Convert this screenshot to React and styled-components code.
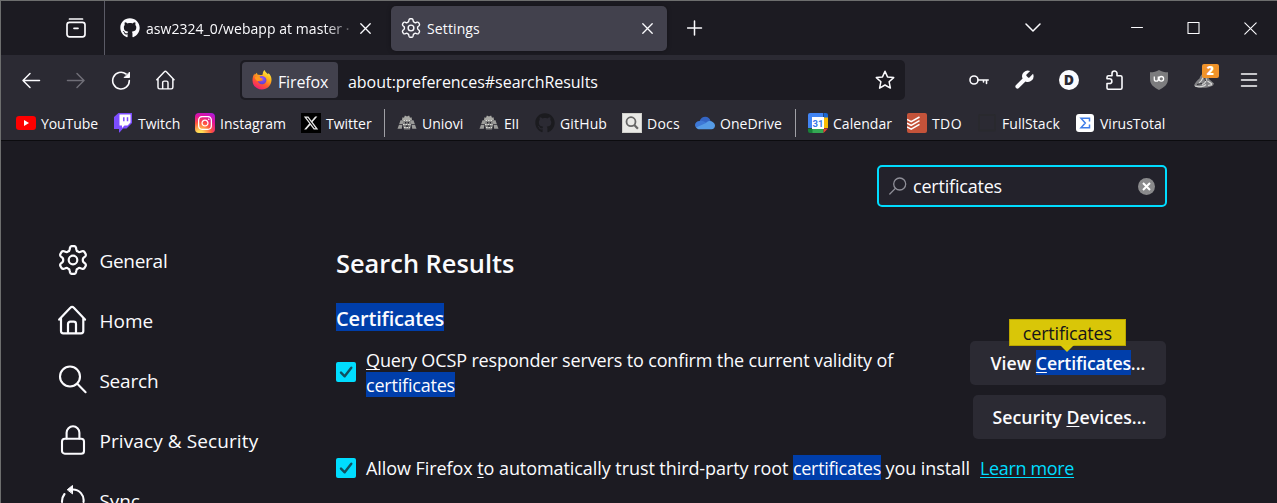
import React from "react";
import styled, { createGlobalStyle } from "styled-components";
import { FaGithub, FaInstagram, FaXTwitter } from "react-icons/fa6";

const Global = createGlobalStyle`
  *, *::before, *::after { box-sizing: border-box; }
  html, body, #root { height: 100%; }
  body {
    margin: 0;
    overflow: hidden;
    background: #1c1b22;
    color: #fbfbfe;
    font-family: "Open Sans", "Noto Sans", sans-serif;
  }
  svg { display: block; flex: none; }
`;

const Window = styled.div`
  height: 100vh;
  display: flex;
  flex-direction: column;
  overflow: hidden;
  border-top: 1px solid #6d6e6e;
  border-left: 1px solid #6d6e6e;
  background: #1c1b22;
`;

/* ---------- tab strip ---------- */
const TabStrip = styled.header`
  flex: none;
  height: 54px;
  display: flex;
  align-items: center;
`;

const FirefoxView = styled.div`
  width: 104px;
  height: 54px;
  padding-left: 64px;
  display: flex;
  align-items: center;
  border-right: 1px solid #5b5b66;
`;

const Tab = styled.div`
  display: flex;
  align-items: center;
  height: 45px;
  width: ${(p) => (p.$active ? 276 : 270)}px;
  padding: 0 ${(p) => (p.$active ? "14px 0 10px" : "4px 0 15px")};
  margin-right: ${(p) => (p.$active ? 0 : 16)}px;
  border-radius: 5px;
  background: ${(p) => (p.$active ? "#42414d" : "transparent")};
  box-shadow: ${(p) => (p.$active ? "0 0 4px rgba(0,0,0,.35)" : "none")};
`;

const TabTitle = styled.span`
  flex: 1;
  min-width: 0;
  margin: 1px 0 0 6px;
  overflow: hidden;
  white-space: nowrap;
  font-size: 14px;
  line-height: 20px;
  letter-spacing: ${(p) => p.$ls || 0}px;
  ${(p) => p.$fade && "mask-image: linear-gradient(to left, transparent 0, #000 36px);"}
`;

const NewTab = styled.div`
  margin-left: 20px;
  width: 16px;
`;

const WindowButtons = styled.div`
  margin-left: auto;
  padding-right: 20px;
  display: flex;
  align-items: center;
`;

const Chevron = styled.div`
  margin-right: 90px;
`;

const Controls = styled.div`
  display: flex;
  align-items: center;
  gap: 44px;
`;

/* ---------- navigation bar ---------- */
const NavBar = styled.nav`
  flex: none;
  height: 50px;
  padding-left: 20px;
  display: flex;
  align-items: center;
  background: #2b2a33;
`;

const NavButtons = styled.div`
  width: 219px;
  display: flex;
  gap: 25px;
`;

const UrlBar = styled.div`
  width: 665px;
  height: 40px;
  padding: 2px 10px 2px 2px;
  display: flex;
  align-items: center;
  border-radius: 5px;
  background: #1c1b22;
`;

const Identity = styled.div`
  width: 96px;
  height: 36px;
  padding-left: 10px;
  display: flex;
  align-items: center;
  gap: 6px;
  border-radius: 4px;
  background: #42414d;
`;

const UrlText = styled.span`
  margin-top: 3px;
  font-size: 16px;
  line-height: 22px;
  letter-spacing: ${(p) => p.$ls || 0}px;
`;

const Address = styled(UrlText)`
  flex: 1;
  margin-left: 10px;
`;

const Extensions = styled.div`
  margin-left: auto;
  padding-right: 19px;
  display: flex;
  align-items: center;
  gap: 25px;
`;

const BadgeHost = styled.div`
  position: relative;
  margin-right: 1px;
`;

const Badge = styled.span`
  position: absolute;
  left: 8px;
  top: -6px;
  width: 17px;
  height: 14px;
  border-radius: 2px;
  background: #f0932b;
  color: #fff;
  font-size: 12.5px;
  font-weight: 800;
  line-height: 13px;
  text-align: center;
`;

const Disc = styled.div`
  width: 20px;
  height: 20px;
  border-radius: 50%;
  background: #fbfbfe;
  color: #2b2a33;
  font-size: 14px;
  font-weight: 800;
  line-height: 20px;
  text-align: center;
`;

/* ---------- bookmarks ---------- */
const Bookmarks = styled.div`
  flex: none;
  height: 36px;
  padding: 1px 0 0 15px;
  display: flex;
  align-items: center;
  background: #2b2a33;
  border-bottom: 1px solid #0c0c0f;
`;

const Bookmark = styled.div`
  width: ${(p) => p.$w}px;
  display: flex;
  align-items: center;
  gap: 5px;
  font-size: 14px;
  line-height: 20px;
  letter-spacing: ${(p) => p.$ls || 0}px;
  white-space: nowrap;
`;

const BookmarkLabel = styled.span`
  padding-top: 2px;
`;

const Divider = styled.div`
  width: 1px;
  height: 28px;
  margin-right: 12px;
  background: #a0a0a6;
`;

/* ---------- preferences ---------- */
const Preferences = styled.main`
  flex: 1;
  min-height: 0;
  display: flex;
  overflow: hidden;
`;

const Sidebar = styled.aside`
  width: 335px;
  flex: none;
  padding: 90px 0 0 57px;
`;

const Category = styled.div`
  height: 60px;
  display: flex;
  align-items: center;
  gap: 11.4px;
  font-size: 19px;
  line-height: 26px;
  letter-spacing: ${(p) => p.$ls || 0}px;
  svg { margin-top: -2px; }
`;

const Pane = styled.section`
  width: 830px;
  flex: none;
  padding-top: 24px;
  display: flex;
  flex-direction: column;
`;

const SearchField = styled.div`
  align-self: flex-end;
  width: 290px;
  height: 42px;
  margin-right: -1px;
  padding: 0 10px;
  display: flex;
  align-items: center;
  border: 2px solid #00ddff;
  border-radius: 5px;
  background: #23222b;
  font-size: 18px;
  line-height: 24px;
  letter-spacing: -0.2px;
  span { flex: 1; margin-left: 6px; }
`;

const Title = styled.h1`
  margin: 38px 0 0;
  font-size: 25.4px;
  font-weight: 600;
  line-height: 36px;
`;

const GroupTitle = styled.h2`
  align-self: flex-start;
  margin: 22px 0 0;
  height: 28px;
  padding-top: 2px;
  background: #003eaa;
  font-size: 20px;
  font-weight: 600;
  line-height: 27px;
  letter-spacing: -0.15px;
`;

const OptionRow = styled.div`
  height: 108px;
  display: flex;
  justify-content: space-between;
`;

const Option = styled.label`
  display: flex;
  align-items: center;
  gap: 10px;
  height: ${(p) => p.$h}px;
  margin-top: 17px;
  font-size: 18px;
  line-height: 25px;
  white-space: nowrap;
  letter-spacing: ${(p) => p.$ls}px;
`;

const Checkbox = styled.span`
  width: 20px;
  height: 20px;
  margin-bottom: ${(p) => p.$lift}px;
  border-radius: 2px;
  background: #00ddff;
`;

const Mark = styled.mark`
  position: relative;
  padding-top: 1px;
  background: #003eaa;
  color: inherit;
  letter-spacing: ${(p) => p.$ls || 0}px;
`;

const AccessKey = styled.span`
  text-decoration: underline;
  text-decoration-thickness: 1px;
  text-underline-offset: 2px;
  text-decoration-skip-ink: none;
`;

const Buttons = styled.div`
  padding-top: 10px;
  display: flex;
  flex-direction: column;
  align-items: flex-end;
  gap: 10px;
`;

const Button = styled.div`
  width: ${(p) => p.$w}px;
  height: 44px;
  border-radius: 5px;
  background: #2b2a33;
  font-size: 17.7px;
  font-weight: 600;
  line-height: 44px;
  text-align: center;
  white-space: nowrap;
  letter-spacing: ${(p) => p.$ls || 0}px;
`;

const Tooltip = styled.span`
  position: absolute;
  left: -27px;
  top: -31px;
  width: 117px;
  height: 27px;
  border: 1px solid #bba600;
  background: rgba(221, 202, 8, 0.98);
  color: #15141a;
  font-size: 18px;
  font-weight: 400;
  line-height: 27px;
  text-align: center;
  letter-spacing: -0.2px;
  &::after {
    content: "";
    position: absolute;
    left: 50px;
    top: 25px;
    border: 7px solid transparent;
    border-bottom: 0;
    border-top-color: #dcc908;
  }
`;

const Link = styled.a`
  color: #00ddff;
  letter-spacing: -0.35px;
  text-decoration: underline;
  text-decoration-thickness: 1px;
  text-underline-offset: 2px;
  text-decoration-skip-ink: none;
`;

/* ---------- icons ---------- */
const Line = ({ w = 20, h = w, sw = 1.5, color = "#fbfbfe", children }) => (
  <svg width={w} height={h} viewBox={`0 0 ${w} ${h}`} fill="none" stroke={color} strokeWidth={sw} strokeLinecap="round" strokeLinejoin="round">
    {children}
  </svg>
);

const gearPath = (() => {
  const pt = (deg, r) => {
    const a = ((deg - 90) * Math.PI) / 180;
    return `${(15 + r * Math.cos(a)).toFixed(2)} ${(15 + r * Math.sin(a)).toFixed(2)}`;
  };
  let d = "";
  for (let k = 0; k < 360; k += 60) {
    d += `${k ? "L" : "M"}${pt(k - 17, 11.2)} L${pt(k - 14, 12.6)} Q${pt(k - 11, 14)} ${pt(k - 5, 14)} L${pt(k + 5, 14)} Q${pt(k + 11, 14)} ${pt(k + 14, 12.6)} L${pt(k + 17, 11.2)} Q${pt(k + 21, 9.6)} ${pt(k + 30, 9.9)} Q${pt(k + 39, 9.6)} ${pt(k + 43, 11.2)}`;
  }
  return d + "Z";
})();

const Gear = ({ size, sw }) => (
  <svg width={size} height={size} viewBox="0 0 30 30" fill="none" stroke="#fbfbfe" strokeWidth={sw} strokeLinejoin="round">
    <path d={gearPath} />
    <circle cx="15" cy="15" r="4.3" />
  </svg>
);

const Cross = ({ s = 11, sw = 1.3 }) => (
  <Line w={s} sw={sw}>
    <path d={`M.8 .8 L${s - 0.8} ${s - 0.8} M${s - 0.8} .8 L.8 ${s - 0.8}`} />
  </Line>
);

const FirefoxLogo = () => (
  <svg width="20" height="20" viewBox="0 0 20 20">
    <defs>
      <linearGradient id="ffBody" x1=".8" y1="0" x2=".25" y2="1">
        <stop offset="0" stopColor="#fff44f" />
        <stop offset=".35" stopColor="#ffb31a" />
        <stop offset=".65" stopColor="#ff5a2e" />
        <stop offset="1" stopColor="#f0147d" />
      </linearGradient>
      <radialGradient id="ffGlobe" cx=".5" cy=".3" r=".8">
        <stop offset="0" stopColor="#9059ff" />
        <stop offset="1" stopColor="#5b3bc4" />
      </radialGradient>
    </defs>
    <path fill="url(#ffBody)" d="M12.6 0c.4 2 2 2.8 3.4 4.3.3-.2.2-.8.1-1.2C18.600 4.800 19.700 7.600 19.500 10.300 19.200 15.600 15 19.600 9.900 19.600 4.600 19.600.5 15.400.5 10.200.5 7.800 1.300 5.300 2.400 3.600l.4 1.600C3.300 4.100 4.200 3.200 5 2.800c0 .8.2 1.500.7 2 .6-.2 1.500-.1 2.100.1C9 5.200 10.100 5 10.700 4.500 10.700 2.500 11.500.9 12.600 0z" />
    <path fill="url(#ffGlobe)" d="M7.400 6.600c2.100-1.500 6.700-.4 7 3.100.2 2.600-1.800 4.600-4.300 4.600-2.200 0-4-1.400-4.200-3.300 1 .7 2.200.6 3.200 0 .8-.4 1.400-.7 2-.7-.1-1.100-1.300-1.400-2.600-1.400-.6-.2-1.500-1.200-1.100-2.300z" />
    <path fill="#ff9a1f" d="M2.800 7.500c1.600-1.500 3.500-1.300 4.800-1.100.2 1.200.9 1.700 2.800 1.900-.4 1.200-1.700 1.300-2.400 1.900-.8.800-1.500.8-2.100.8C4.600 11 3 9.400 2.800 7.500z" />
  </svg>
);

const YouTube = () => (
  <svg width="20" height="20" viewBox="0 0 20 20">
    <rect y="3" width="20" height="14" rx="3.2" fill="#f00" />
    <path d="M8 7v6l5-3z" fill="#fff" />
  </svg>
);

const Twitch = () => (
  <svg width="20" height="20" viewBox="0 0 20 20">
    <path d="M5.500 0H19v10l-5.500 5.500h-3.500L6.500 19.500H6V16H1V4z" fill="#7c4dff" />
    <path d="M6.500 1.500H17.500v8l-3 3h-3L9 15v-2.500H6.500z" fill="#fff" />
    <path d="M10.800 4.200v4M14.500 4.200v4" stroke="#7c4dff" strokeWidth="1.500" />
  </svg>
);

const TileFrame = styled.div`
  width: 20px;
  height: 20px;
  flex: none;
  display: flex;
  align-items: center;
  justify-content: center;
  border-radius: ${(p) => p.$r || 0}px;
  background: ${(p) => p.$bg};
`;

const Crest = () => (
  <svg width="20" height="20" viewBox="0 0 20 20" fill="#a9a9a5">
    <path d="M5.500 4.300l1.500.5.900-2.200 2.100.8 2.100-.8.900 2.200 1.500-.5.500 2.700h-10z" />
    <path d="M3.500 7.300h3l-.8 3.700H2.200zM16.500 7.300h-3l.8 3.700h3.500zM2 11.700h3.400l-.6 4H.5zM18 11.700h-3.400l.6 4h4.300z" opacity=".9" />
    <path d="M6.500 7h7l1 3.500-1.500 6H7L5.500 10.500z" opacity=".7" />
    <path d="M6.500 7.500h7M6 11.500h8M7 14.500h6" stroke="#deded8" strokeWidth="1" strokeDasharray="1.600 .9" />
    <path d="M8 9h1.300v1.400H8zM10.700 9H12v1.400h-1.300zM8.800 12.500h2.500v1.200H8.800z" fill="#25242b" />
  </svg>
);

const Docs = () => (
  <svg width="20" height="20" viewBox="0 0 20 20" fill="none">
    <rect x=".5" y=".5" width="19" height="19" fill="#e9e9e6" stroke="#cfcfcb" />
    <circle cx="9" cy="8.700" r="4.500" stroke="#666" strokeWidth="1.800" />
    <path d="M12.300 12l3.600 3.800" stroke="#666" strokeWidth="2.200" />
  </svg>
);

const OneDrive = () => (
  <svg width="20" height="20" viewBox="0 0 20 20">
    <path d="M4.500 8.500C5.500 5 8 3.700 10.300 3.700c2.700 0 4.700 1.800 5.300 4.300L12 14 3 12z" fill="#3465c4" />
    <path d="M4.500 8c3-.5 5 .5 7.500 2.200L3 15.500C1 15 0 13.500 0 12c0-2.200 2-4 4.500-4z" fill="#3e78d6" />
    <path d="M11 10c2-2.300 5-2.500 7-.7 1.300 1 2 2.200 2 3.200 0 2-1.500 3.800-3.500 3.800H4.500c-1.500 0-2.500-.8-3.500-1.800z" fill="#559be6" />
  </svg>
);

const Calendar = () => (
  <svg width="20" height="20" viewBox="0 0 20 20">
    <path d="M2 0h13v4.500H4.500V15H0V2a2 2 0 0 1 2-2z" fill="#4285f4" />
    <path d="M15.500 0H18a2 2 0 0 1 2 2v3h-4.500z" fill="#1a67d2" />
    <path d="M15.500 4.500H20V15h-4.500z" fill="#fbbc04" />
    <path d="M4 15.500h11.500V20H4z" fill="#34a853" />
    <path d="M0 15.500h4.500V20H2a2 2 0 0 1-2-2z" fill="#188038" />
    <path d="M15.500 15.500H20L15.500 20z" fill="#ea4335" />
    <rect x="4" y="4" width="12" height="12" fill="#fff" />
    <text x="10" y="13.500" fontFamily="Roboto, sans-serif" fontWeight="700" fontSize="9.500" fill="#3b78e7" textAnchor="middle">31</text>
  </svg>
);

const Todoist = () => (
  <svg width="20" height="20" viewBox="0 0 20 20" fill="none" stroke="#fff" strokeWidth="1.500">
    <rect width="20" height="20" rx="2" fill="#c4533a" stroke="none" />
    <path d="M0 6.500l4.200 2.200L12.500 4M0 10.200l4.200 2.200 8.300-4.800M0 13.900l4.200 2.200 8.300-4.800" />
  </svg>
);

const FaintSquare = () => (
  <svg width="20" height="20" viewBox="0 0 20 20" fill="none" stroke="#29292e" strokeWidth="2">
    <rect x="2" y="2" width="16" height="15.500" rx="1" />
  </svg>
);

const VirusTotal = () => (
  <svg width="20" height="20" viewBox="0 0 20 20" fill="none">
    <rect x="1" y="1" width="18" height="18" rx="3" fill="#fff" />
    <path d="M14.500 8.500V5.200H6L10.300 10 6 14.800h8.500V11.500" stroke="#3f7de8" strokeWidth="1.500" />
  </svg>
);

const Shield = () => (
  <svg width="20" height="20" viewBox="0 0 20 20">
    <path d="M10 0c2.500 1.800 5.500 2.300 9 2.300V9c0 5.500-4 8.500-9 11C5 17.500 1 14.500 1 9V2.300C4.500 2.300 7.500 1.800 10 0z" fill="#7c7c7e" />
    <path d="M5.300 6.500v2.700a2 2 0 0 0 4 0V6.500M10 8.800a2.300 2.300 0 1 0 4.600 0 2.300 2.300 0 1 0-4.600 0" fill="none" stroke="#fff" strokeWidth="1.300" />
  </svg>
);

const Fox = () => (
  <svg width="20" height="20" viewBox="0 0 20 20">
    <path d="M0 15.500c1-3 3-5 5.500-7C6.500 5 9 2.500 13 3l2 6 5 4.500-1 2c-3 1.700-7 2.500-11 2.300C4.500 18 1.500 17.500 0 15.500z" fill="#808083" />
    <path d="M1 16c4 1.500 9 .5 11-1.500M5 13c2-1 3-3 4-5.500M8 14.500c2.500-.5 4-3 4.500-6M13.500 11l4.500 3M14 15.500l4-.8" fill="none" stroke="#d8d8d8" strokeWidth="1.200" />
    <path d="M3 14.500l5-1M10 6l1.500 5" stroke="#303035" strokeWidth="1" />
  </svg>
);

const Home = ({ size, sw }) => (
  <svg width={size} height={size} viewBox="0 0 30 30" fill="none" stroke="#fbfbfe" strokeWidth={sw} strokeLinecap="round" strokeLinejoin="round">
    <path d="M1.200 14.600L12.600 2.600a2 2 0 0 1 3 0L27 14.600M3 13V26a2.300 2.300 0 0 0 2.300 2.300H23A2.300 2.300 0 0 0 25.300 26V13M10 28V19a2.300 2.300 0 0 1 2.300-2.300h3.400A2.300 2.300 0 0 1 18 19v9" />
  </svg>
);

const categories = [
  { label: "General", ls: -0.27, icon: <Gear size={30} sw={2.2} /> },
  { label: "Home", ls: 0.05, icon: <Home size={30} sw={2.2} /> },
  {
    label: "Search", ls: -0.2,
    icon: <Line w={30} sw={2.1}><circle cx="12" cy="11.500" r="10" /><path d="M19.300 18.800L27.600 27.200" /></Line>,
  },
  {
    label: "Privacy & Security", ls: 0.1,
    icon: <Line w={30} sw={2.1}><rect x="4" y="13.700" width="22" height="15" rx="2.800" /><path d="M8.600 13.500V7.700a6.400 6.400 0 0 1 12.800 0V13.500" /></Line>,
  },
  {
    label: "Sync", ls: -0.1,
    icon: (
      <Line w={30} sw={2.1}>
        <path d="M14.500 4.500A10.800 10.800 0 0 1 25.500 17M6.500 9A12 12 0 0 0 4 17" />
        <path d="M9.500 4.500L14.500 .5v8z" fill="#fbfbfe" strokeWidth="1" />
      </Line>
    ),
  },
];

const bookmarks = [
  { label: "YouTube", w: 97, ls: -0.07, icon: <YouTube /> },
  { label: "Twitch", w: 82, icon: <Twitch /> },
  {
    label: "Instagram", w: 106,
    icon: <TileFrame $r={4} $bg="radial-gradient(circle at 25% 105%, #fd5 0, #fd5 12%, #ff543e 45%, #e0129c 70%, #a01df0 100%)"><FaInstagram size={16} color="#fff" /></TileFrame>,
  },
  { label: "Twitter", w: 83, icon: <TileFrame $bg="#000"><FaXTwitter size={16} color="#e8e8e8" /></TileFrame> },
  "|",
  { label: "Uniovi", w: 82, icon: <Crest /> },
  { label: "EII", w: 56, ls: -0.2, icon: <Crest /> },
  { label: "GitHub", w: 87, ls: 0.15, icon: <FaGithub size={20} color="#1b1b1f" /> },
  { label: "Docs", w: 73, ls: 0.25, icon: <Docs /> },
  { label: "OneDrive", w: 100, ls: 0.05, icon: <OneDrive /> },
  "|",
  { label: "Calendar", w: 99, ls: 0.05, icon: <Calendar /> },
  { label: "TDO", w: 70, ls: 0.4, icon: <Todoist /> },
  { label: "FullStack", w: 98, ls: 0.05, icon: <FaintSquare /> },
  { label: "VirusTotal", w: 100, icon: <VirusTotal /> },
];

const Check = ({ lift }) => (
  <Checkbox $lift={lift}>
    <Line w={20} sw={2.4} color="#10505f"><path d="M5 10.600L8.700 14.300 15.300 5.800" /></Line>
  </Checkbox>
);

export default function App() {
  return (
    <>
      <Global />
      <Window>
        <TabStrip>
          <FirefoxView>
            <Line w={22} sw={1.7}>
              <path d="M4.500 2h13" />
              <rect x="2" y="5.300" width="18" height="14.500" rx="2.500" />
              <path d="M9 11.300h4" />
            </Line>
          </FirefoxView>
          <Tab>
            <FaGithub size={20} color="#fbfbfe" />
            <TabTitle $fade $ls={0.05}>asw2324_0/webapp at master ·</TabTitle>
            <Cross />
          </Tab>
          <Tab $active>
            <Gear size={20} sw={2.1} />
            <TabTitle $ls={0.12}>Settings</TabTitle>
            <Cross />
          </Tab>
          <NewTab>
            <Line w={16} sw={1.5}><path d="M7.500 1v14M.5 8h14" /></Line>
          </NewTab>
          <WindowButtons>
            <Chevron><Line w={16} h={10} sw={1.5}><path d="M1 1l7 7 7-7" /></Line></Chevron>
            <Controls>
              <Line w={12} sw={1}><path d="M.5 5.500h11" /></Line>
              <Line w={13} sw={1.1}><rect x="1" y=".5" width="11" height="11" /></Line>
              <Cross s={13} sw={1.1} />
            </Controls>
          </WindowButtons>
        </TabStrip>

        <NavBar>
          <NavButtons>
            <Line w={20}><path d="M18.500 10.500H2M9 3.500l-7 7 7 7" /></Line>
            <Line w={20} color="#6f6e77"><path d="M1.500 10.500H18M11 3.500l7 7-7 7" /></Line>
            <Line w={20} sw={1.6}>
              <path d="M18.300 10.500A8.300 8.300 0 1 1 15 4" />
              <path d="M18.500 2.500v5h-5z" fill="#fbfbfe" strokeWidth="1" />
            </Line>
            <Home size={20} sw={2.2} />
          </NavButtons>
          <UrlBar>
            <Identity>
              <FirefoxLogo />
              <UrlText $ls={-0.15}>Firefox</UrlText>
            </Identity>
            <Address $ls={-0.03}>about:preferences#searchResults</Address>
            <Line w={20} sw={1.5}>
              <path d="M10 1.300l2.500 5.600 6.200.7-4.600 4.100 1.300 6.400L10 15l-5.400 3.100 1.300-6.400L1.300 7.600l6.200-.7z" />
            </Line>
          </UrlBar>
          <Extensions>
            <Line w={20} sw={1.6}>
              <circle cx="5" cy="10" r="4" />
              <path d="M9 10h10.200M17.500 10v3.500M14.500 10v2" />
            </Line>
            <svg width="20" height="20" viewBox="1.500 1.500 21 21" fill="#fbfbfe">
              <path d="M14.700 6.300a1 1 0 0 0 0 1.400l1.600 1.600a1 1 0 0 0 1.400 0l3.770-3.770a6 6 0 0 1-7.940 7.940l-6.910 6.910a2.120 2.120 0 0 1-3-3l6.910-6.910a6 6 0 0 1 7.940-7.940l-3.760 3.760z" />
            </svg>
            <Disc>D</Disc>
            <Line w={20} sw={1.6}>
              <path d="M3 13.500V18a1.200 1.200 0 0 0 1.200 1.200H16.500A1.500 1.500 0 0 0 18 17.700V7.300A1.500 1.500 0 0 0 16.500 5.800H13V3.500a2.500 2.500 0 0 0-5 0V5.800H4.500A1.500 1.500 0 0 0 3 7.300V8.800H5.500a2.350 2.350 0 0 1 0 4.700z" />
            </Line>
            <Shield />
            <BadgeHost><Fox /><Badge>2</Badge></BadgeHost>
            <Line w={18} h={16} sw={1.5}><path d="M1.500 2h15M1.500 8h15M1.500 14h15" /></Line>
          </Extensions>
        </NavBar>

        <Bookmarks>
          {bookmarks.map((b, i) =>
            b === "|" ? <Divider key={i} /> : (
              <Bookmark key={i} $w={b.w} $ls={b.ls}>
                {b.icon}
                <BookmarkLabel>{b.label}</BookmarkLabel>
              </Bookmark>
            )
          )}
        </Bookmarks>

        <Preferences>
          <Sidebar>
            {categories.map((c) => (
              <Category key={c.label} $ls={c.ls}>{c.icon}{c.label}</Category>
            ))}
          </Sidebar>
          <Pane>
            <SearchField>
              <Line w={18} sw={1.3} color="#8f8f98"><circle cx="10.700" cy="7" r="6" /><path d="M6.400 11.400L.8 17" /></Line>
              <span>certificates</span>
              <svg width="17" height="17" viewBox="0 0 17 17">
                <circle cx="8.500" cy="8.500" r="8.500" fill="#8a8a8c" />
                <path d="M5 5l7 7M12 5l-7 7" stroke="#fff" strokeWidth="2" />
              </svg>
            </SearchField>
            <Title>Search Results</Title>
            <GroupTitle>Certificates</GroupTitle>
            <OptionRow>
              <Option $h={50} $ls={-0.14}>
                <Check lift={3} />
                <span>
                  <AccessKey>Q</AccessKey>uery OCSP responder servers to confirm the current validity of<br />
                  <Mark $ls={-0.2}>certificates</Mark>
                </span>
              </Option>
              <Buttons>
                <Button $w={196} $ls={0.02}>
                  View{" "}
                  <Mark $ls={-0.18}>
                    <AccessKey>C</AccessKey>ertificates
                    <Tooltip>certificates</Tooltip>
                  </Mark>
                  ...
                </Button>
                <Button $w={193} $ls={0.04}>Security <AccessKey>D</AccessKey>evices...</Button>
              </Buttons>
            </OptionRow>
            <Option $h={25} $ls={-0.07}>
              <Check lift={1} />
              <span>
                Allow Firefox <AccessKey>t</AccessKey>o automatically trust third-party root{" "}
                <Mark $ls={-0.28}>certificates</Mark> you install
              </span>
              <Link>Learn more</Link>
            </Option>
          </Pane>
        </Preferences>
      </Window>
    </>
  );
}
